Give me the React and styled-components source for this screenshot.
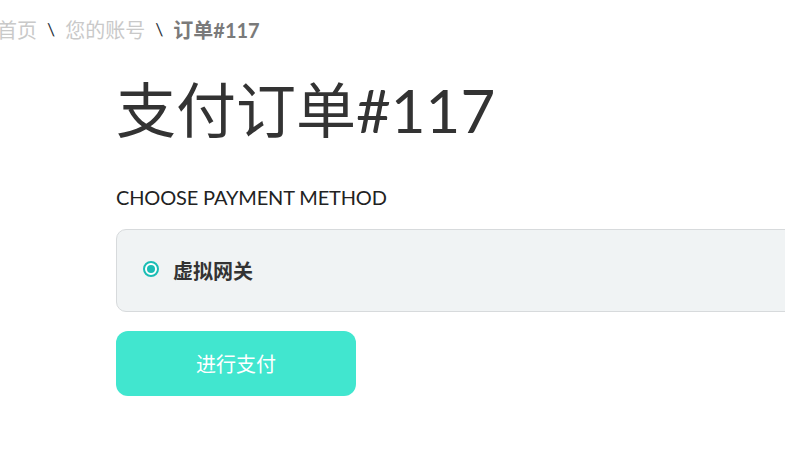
import React from "react";
import styled, { createGlobalStyle } from "styled-components";

const Global = createGlobalStyle`
  html, body { margin: 0; padding: 0; background: #fff; overflow: hidden; }
  body { font-family: Lato, "Noto Sans CJK SC", sans-serif; }
`;

const Page = styled.div`
  width: 785px;
  height: 450px;
  overflow: hidden;
`;

const Breadcrumb = styled.nav`
  display: flex;
  align-items: center;
  gap: 10px;
  margin-left: -3px;
  padding-top: 16px;
  height: 26px;
  font-size: 20px;
  white-space: nowrap;
`;

const Crumb = styled.span`
  color: ${(p) => (p.$current ? "#7a7a7a" : "#c9c9c9")};
  font-weight: ${(p) => (p.$current ? 700 : 400)};
`;

const Sep = styled.span`
  color: #2b3440;
  font-size: 18px;
`;

const Main = styled.main`
  padding-left: 116px;
`;

const Title = styled.h1`
  margin: 32px 0 0;
  font-size: 60px;
  line-height: 72px;
  font-weight: 400;
  color: #333;
  white-space: nowrap;
`;

const Section = styled.h2`
  margin: 39px 0 0;
  font-size: 20px;
  line-height: 24px;
  font-weight: 400;
  color: #222;
  letter-spacing: -0.15px;
`;

const MethodBox = styled.label`
  margin-top: 20px;
  width: 800px;
  height: 83px;
  box-sizing: border-box;
  display: flex;
  align-items: center;
  gap: 14px;
  padding-left: 26px;
  background: #f0f3f4;
  border: 1px solid #d7dadc;
  border-radius: 10px;
`;

const Radio = styled.span`
  width: 16px;
  height: 16px;
  box-sizing: border-box;
  border-radius: 50%;
  border: 2px solid #1bbdb5;
  background: #fff;
  display: flex;
  align-items: center;
  justify-content: center;
  margin-top: -4px;
  &::after {
    content: "";
    width: 8px;
    height: 8px;
    border-radius: 50%;
    background: #1bbdb5;
  }
`;

const MethodLabel = styled.span`
  font-size: 20px;
  font-weight: 700;
  color: #333;
`;

const PayButton = styled.button`
  margin-top: 19px;
  width: 240px;
  height: 65px;
  border: none;
  border-radius: 12px;
  background: #41e6cf;
  color: #fff;
  font-family: Lato, "Noto Sans CJK SC", sans-serif;
  font-size: 20px;
  cursor: pointer;
`;

export default function App() {
  return (
    <Page>
      <Global />
      <Breadcrumb>
        <Crumb>首页</Crumb>
        <Sep>\</Sep>
        <Crumb>您的账号</Crumb>
        <Sep>\</Sep>
        <Crumb $current>订单#117</Crumb>
      </Breadcrumb>
      <Main>
        <Title>支付订单#117</Title>
        <Section>CHOOSE PAYMENT METHOD</Section>
        <MethodBox>
          <Radio />
          <MethodLabel>虚拟网关</MethodLabel>
        </MethodBox>
        <PayButton>进行支付</PayButton>
      </Main>
    </Page>
  );
}
